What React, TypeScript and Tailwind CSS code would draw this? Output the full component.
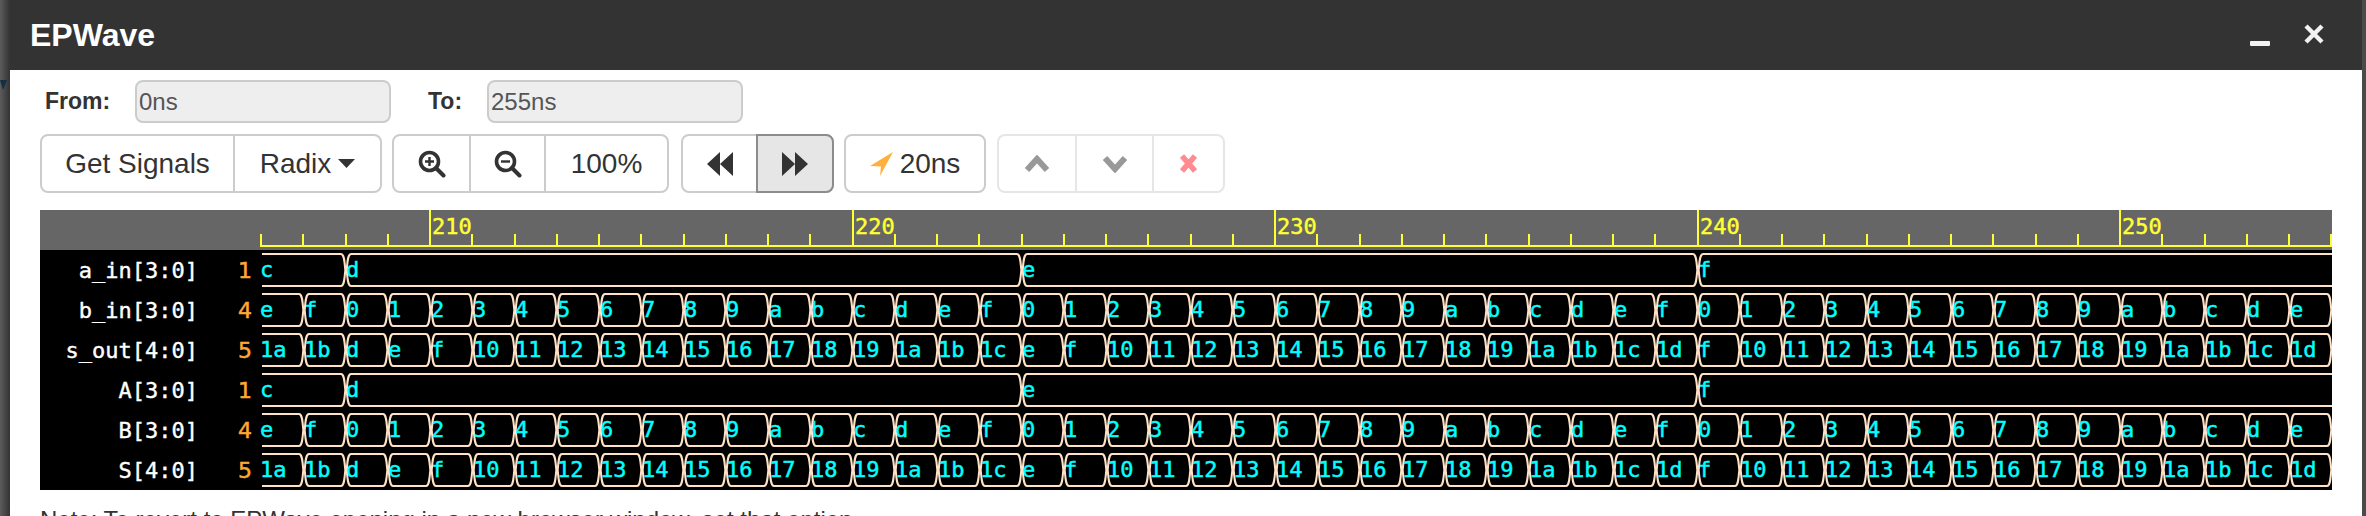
import React from "react";

const PX = 42.25;
const START = 206;
const END_T = 255;
const SANS = "font-['Liberation_Sans',Arial,sans-serif]";

type Seg = { t: number; v: string };

const hex = (n: number) => n.toString(16);
const ticks: number[] = [];
for (let t = START; t <= END_T; t++) ticks.push(t);

const aVal = (t: number) => (t < 208 ? 12 : t < 224 ? 13 : t < 240 ? 14 : 15);
const bVal = (t: number) => (t - 192) % 16;

const aSegs: Seg[] = [
  { t: 206, v: "c" },
  { t: 208, v: "d" },
  { t: 224, v: "e" },
  { t: 240, v: "f" },
];
const bSegs: Seg[] = ticks.map((t) => ({ t, v: t === END_T ? "" : hex(bVal(t)) }));
const sSegs: Seg[] = ticks.map((t) => ({ t, v: t === END_T ? "" : hex(aVal(t) + bVal(t)) }));

const rows = [
  { name: "a_in[3:0]", n: "1", segs: aSegs },
  { name: "b_in[3:0]", n: "4", segs: bSegs },
  { name: "s_out[4:0]", n: "5", segs: sSegs },
  { name: "A[3:0]", n: "1", segs: aSegs },
  { name: "B[3:0]", n: "4", segs: bSegs },
  { name: "S[4:0]", n: "5", segs: sSegs },
];

function Wave({ segs }: { segs: Seg[] }) {
  const W = 2072;
  const xOf = (t: number) => Math.round((t - START) * PX + 1.5);
  return (
    <svg width={W} height={40} className="block shrink-0">
      {segs.map((s, i) => {
        const first = i === 0;
        const next = segs[i + 1];
        const x0 = first ? 2 : xOf(s.t);
        const x1 = next ? xOf(next.t) : W + 6;
        const right = `L${x1 - 5} 4 C${x1 - 2} 4 ${x1 - 1.5} 10 ${x1 - 0.7} 20 C${x1 - 1.5} 30 ${x1 - 2} 36 ${x1 - 5} 36`;
        const d = first
          ? `M${x0} 4 ${right} L${x0} 36`
          : `M${x0 + 5} 4 ${right} L${x0 + 5} 36 C${x0 + 2} 36 ${x0 + 1.5} 30 ${x0 + 0.7} 20 C${x0 + 1.5} 10 ${x0 + 2} 4 ${x0 + 5} 4`;
        return (
          <g key={s.t}>
            <path d={d} fill="none" stroke="#ffe2c6" strokeWidth={2} />
            {s.v && (
              <text
                x={first ? 0 : x0}
                y={27}
                fill="#0ff"
                stroke="#0ff"
                strokeWidth={0.45}
                fontSize={22}
                className="font-['DejaVu_Sans_Mono',monospace]"
              >
                {s.v}
              </text>
            )}
          </g>
        );
      })}
    </svg>
  );
}

function Ruler() {
  return (
    <svg width={2292} height={40} className="block">
      <line x1={220} x2={2292} y1={36} y2={36} stroke="#ffff33" strokeWidth={2} />
      {ticks.map((t) => {
        const x = Math.round(221 + (t - START) * PX);
        const major = t % 10 === 0;
        return (
          <g key={t}>
            <line x1={x} x2={x} y1={major ? 0 : 24} y2={36} stroke="#ffff33" strokeWidth={2} />
            {major && (
              <text x={x + 2} y={24} fill="#ffff33" stroke="#ffff33" strokeWidth={0.45} fontSize={22} className="font-['DejaVu_Sans_Mono',monospace]">
                {t}
              </text>
            )}
          </g>
        );
      })}
    </svg>
  );
}

const Div = "border-l-2 border-[#ccc] flex items-center justify-center";

function ZoomIcon({ minus }: { minus?: boolean }) {
  return (
    <svg width={28} height={28} viewBox="0 0 28 28">
      <circle cx={11.5} cy={11.5} r={9} fill="none" stroke="#333" strokeWidth={3.6} />
      <path d="M18 18 L25.5 25.5" stroke="#333" strokeWidth={4} strokeLinecap="round" />
      <path d={minus ? "M7 11.5 H16" : "M7 11.5 H16 M11.5 7 V16"} stroke="#333" strokeWidth={2.4} />
    </svg>
  );
}

function Back() {
  return (
    <svg width={26} height={24} viewBox="0 0 26 24">
      <path d="M13 0 V24 L0 12 Z M26 0 V24 L13 12 Z" fill="#333" />
    </svg>
  );
}

function Fwd() {
  return (
    <svg width={26} height={24} viewBox="0 0 26 24">
      <path d="M0 0 V24 L13 12 Z M13 0 V24 L26 12 Z" fill="#333" />
    </svg>
  );
}

export default function App() {
  return (
    <div className={`w-[2366px] h-[516px] overflow-hidden flex bg-[#444] ${SANS}`}>
      <div className="w-[10px] shrink-0 bg-gradient-to-r from-[#5c5c5c] to-[#333]">
        <svg width={10} height={100} className="block">
          <path d="M0 80 H7 L3 90 Z" fill="#12303f" />
        </svg>
      </div>
      <div className="w-[2352px] shrink-0 bg-white flex flex-col">
        <div className="h-[70px] shrink-0 bg-[#333] flex items-center text-white relative">
          <span className="ml-[20px] text-[32px] font-bold leading-none -mt-[1px]">EPWave</span>
          <svg width={22} height={8} className="ml-auto mt-[18px]">
            <rect x={1} y={1} width={20} height={5} rx={1} fill="#f2f2f2" />
          </svg>
          <svg width={22} height={22} viewBox="0 0 22 22" className="ml-[32px] mr-[37px] -mt-[3px]">
            <path d="M3 3 L19 19 M19 3 L3 19" stroke="#f2f2f2" strokeWidth={4.4} />
          </svg>
        </div>

        <div className="mt-[10px] h-[43px] shrink-0 flex items-center text-[#333] text-[23px] font-bold">
          <span className="ml-[35px] w-[90px]">From:</span>
          <div className="w-[256px] h-[43px] border-2 border-[#ccc] rounded-[8px] bg-[#eee] flex items-center pl-[2px] text-[24px] font-normal text-[#555]">
            0ns
          </div>
          <span className="ml-[37px] w-[59px]">To:</span>
          <div className="w-[256px] h-[43px] border-2 border-[#ccc] rounded-[8px] bg-[#eee] flex items-center pl-[2px] text-[24px] font-normal text-[#555]">
            255ns
          </div>
        </div>

        <div className="mt-[11px] h-[59px] shrink-0 flex text-[#333] text-[28px] ml-[30px]">
          <div className="w-[342px] flex border-2 border-[#ccc] rounded-[8px]">
            <div className="w-[191px] flex items-center justify-center">Get Signals</div>
            <div className={`flex-1 gap-[7px] ${Div}`}>
              Radix
              <svg width={17} height={9} viewBox="0 0 17 9">
                <path d="M0 0 H17 L8.5 9 Z" fill="#333" />
              </svg>
            </div>
          </div>
          <div className="ml-[10px] w-[277px] flex border-2 border-[#ccc] rounded-[8px]">
            <div className="w-[75px] flex items-center justify-center"><ZoomIcon /></div>
            <div className={`w-[75px] ${Div}`}><ZoomIcon minus /></div>
            <div className={`flex-1 ${Div}`}>100%</div>
          </div>
          <div className="ml-[12px] w-[153px] flex border-2 border-[#ccc] rounded-[8px]">
            <div className="w-[73px] flex items-center justify-center"><Back /></div>
            <div className="flex-1 -my-[2px] -mr-[2px] border-2 border-[#8c8c8c] rounded-r-[8px] bg-[#e6e6e6] flex items-center justify-center">
              <Fwd />
            </div>
          </div>
          <div className="ml-[10px] w-[142px] border-2 border-[#ccc] rounded-[8px] flex items-center justify-center gap-[7px]">
            <svg width={23} height={24} viewBox="0 0 23 24">
              <path d="M23 0 L0 14 L11 14.5 L10 24 Z" fill="#ffb03b" />
            </svg>
            20ns
          </div>
          <div className="ml-[11px] w-[228px] flex border-2 border-[#e6e6e6] rounded-[8px]">
            <div className="w-[76px] flex items-center justify-center">
              <svg width={26} height={18} viewBox="0 0 26 18">
                <path d="M3 15 L13 4 L23 15" fill="none" stroke="#999" strokeWidth={6} />
              </svg>
            </div>
            <div className="w-[77px] border-l-2 border-[#e6e6e6] flex items-center justify-center">
              <svg width={26} height={18} viewBox="0 0 26 18">
                <path d="M3 3 L13 14 L23 3" fill="none" stroke="#999" strokeWidth={6} />
              </svg>
            </div>
            <div className="flex-1 border-l-2 border-[#e6e6e6] flex items-center justify-center">
              <svg width={19} height={19} viewBox="0 0 19 19">
                <path d="M3 2 L16 17 M16 2 L3 17" stroke="#ff8a8f" strokeWidth={5.6} />
              </svg>
            </div>
          </div>
        </div>

        <div className="mt-[17px] ml-[30px] w-[2292px] shrink-0">
          <div className="h-[40px] bg-[#666]">
            <Ruler />
          </div>
          <div className="bg-black">
            {rows.map((r) => (
              <div key={r.name} className="h-[40px] flex">
                <div className="w-[158px] text-right text-white text-[22px] leading-[40px] font-['DejaVu_Sans_Mono',monospace] pt-[1px] [-webkit-text-stroke:0.4px_white]">
                  {r.name}
                </div>
                <div className="w-[54px] text-right text-[#ffa733] text-[22px] leading-[40px] font-['DejaVu_Sans',sans-serif] pt-[1px] [-webkit-text-stroke:0.5px_#ffa733]">
                  {r.n}
                </div>
                <div className="w-[8px] shrink-0" />
                <Wave segs={r.segs} />
              </div>
            ))}
          </div>
        </div>

        <p className="mt-[15px] ml-[30px] text-[24px] leading-[30px] text-[#333] whitespace-nowrap shrink-0">
          Note: To revert to EPWave opening in a new browser window, set that option
        </p>
      </div>
      <div className="flex-1 bg-[#4a4a4a]" />
    </div>
  );
}
